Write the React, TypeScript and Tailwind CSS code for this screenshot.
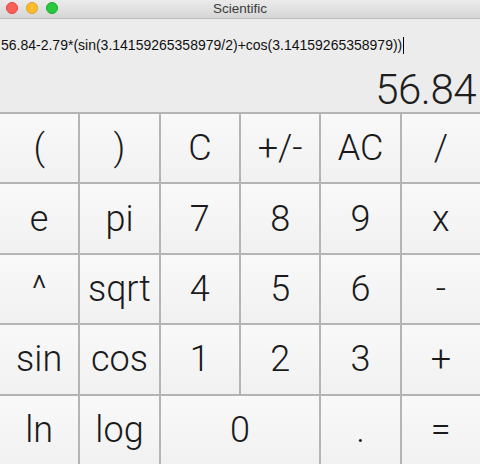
const KEYS: { label: string; span?: boolean }[] = [
  { label: "(" }, { label: ")" }, { label: "C" }, { label: "+/-" }, { label: "AC" }, { label: "/" },
  { label: "e" }, { label: "pi" }, { label: "7" }, { label: "8" }, { label: "9" }, { label: "x" },
  { label: "^" }, { label: "sqrt" }, { label: "4" }, { label: "5" }, { label: "6" }, { label: "-" },
  { label: "sin" }, { label: "cos" }, { label: "1" }, { label: "2" }, { label: "3" }, { label: "+" },
  { label: "ln" }, { label: "log" }, { label: "0", span: true }, { label: "." }, { label: "=" },
];

const EXPR = "56.84-2.79*(sin(3.14159265358979/2)+cos(3.14159265358979))";

export default function App() {
  return (
    <div className="w-[480px] h-[464px] flex flex-col bg-[#ececec] overflow-hidden font-['Liberation_Sans',Arial,sans-serif]">
      {/* title bar */}
      <div className="relative h-[19px] shrink-0 flex items-center justify-center bg-gradient-to-b from-[#ebebeb] to-[#d6d6d6] border-b border-[#bdbdbd]">
        <div className="absolute left-[6px] top-[2px] flex gap-[8px]">
          <span className="w-[12px] h-[12px] rounded-full bg-[#fc5f57] border border-[#e0443e]" />
          <span className="w-[12px] h-[12px] rounded-full bg-[#fdbc2e] border border-[#dea123]" />
          <span className="w-[12px] h-[12px] rounded-full bg-[#28c840] border border-[#1aab29]" />
        </div>
        <span className="text-[13.5px] text-[#3c3c3c] leading-none">Scientific</span>
      </div>

      {/* display */}
      <div className="h-[93px] shrink-0 flex flex-col">
        <div className="flex items-center pl-[1px] pt-[10px] h-[42px] text-[14px] text-[#111] whitespace-nowrap">
          <span>{EXPR}</span>
          <span className="ml-[1px] w-[1px] h-[17px] bg-black" />
        </div>
        <div className="flex-1 flex items-center justify-end pr-[4px] pt-[6px] text-[42px] font-light text-[#1e1e1e] font-['Roboto',sans-serif] leading-none tracking-[-0.5px]">
          56.84
        </div>
      </div>

      {/* keypad */}
      <div className="flex-1 grid grid-cols-6 grid-rows-5 gap-[2px] pt-[2px] bg-[#b4b4b4]">
        {KEYS.map((k) => (
          <button
            key={k.label}
            className={`${k.span ? "col-span-2" : ""} flex items-center justify-center bg-gradient-to-b from-[#f9f9f9] to-[#f1f1f1] text-[36px] font-light text-[#1a1a1a] font-['Roboto',sans-serif] leading-none`}
          >
            {k.label}
          </button>
        ))}
      </div>
    </div>
  );
}
